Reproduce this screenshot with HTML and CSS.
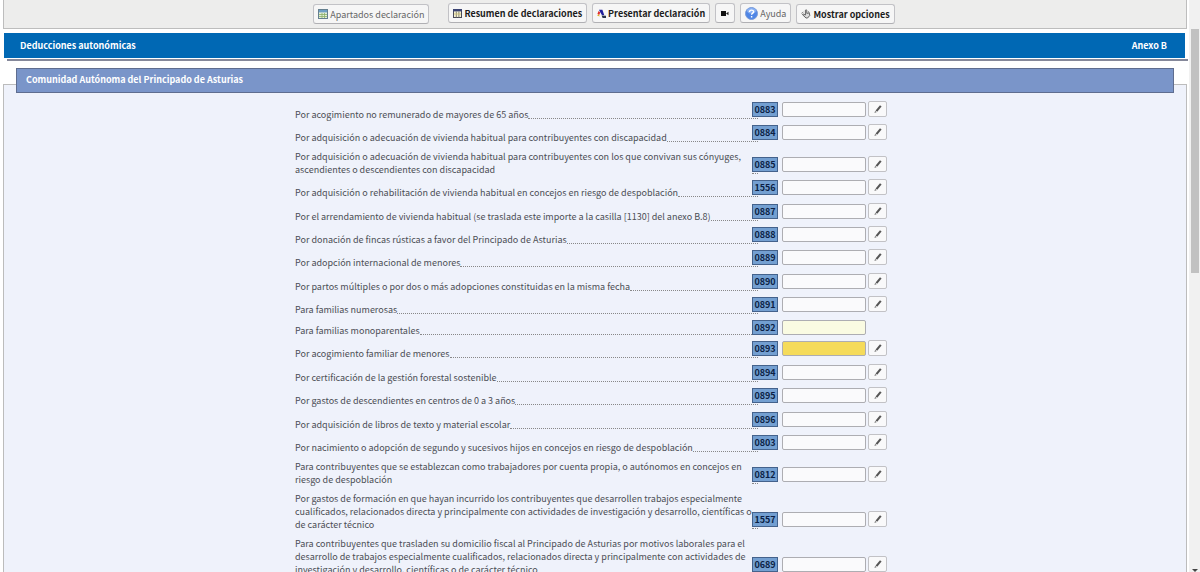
FILE: index.html
```html
<!DOCTYPE html>
<html lang="es">
<head>
<meta charset="utf-8">
<title>Deducciones autonómicas</title>
<link rel="stylesheet" href="styles.css">
</head>
<body>
<svg class="sprite" aria-hidden="true">
  <symbol id="pencil" viewBox="0 0 10 10"><path d="M7 1.2 8.6 2.6 4.2 7.8 2.6 6.4Z" fill="#555"/><path d="M2.2 6.8 3.6 8.2 1.4 9Z" fill="#777"/></symbol>
</svg>
<div class="page">
  <div class="content">
    <header class="toolbar">
      <button class="btn btn--wide btn--soft" type="button">
        <svg class="icon" viewBox="0 0 10 10"><rect x=".5" y=".5" width="9" height="9" fill="#e3efd8" stroke="#65808f"/><rect x="1" y="1" width="8" height="2.4" fill="#6f9fc4"/><path d="M1 5.5h8M1 7.5h8M4 4v5M6.5 4v5" stroke="#8db06a" stroke-width=".8"/></svg>
        Apartados declaración</button>
      <button class="btn btn--main" type="button">
        <svg class="icon icon--sm" viewBox="0 0 9 9"><rect x=".5" y=".5" width="8" height="8" fill="#f6f2d4" stroke="#4a4a58"/><rect x="0" y="0" width="9" height="2.4" fill="#3c4473"/><path d="M3.3 2.5v6M5.9 2.5v6" stroke="#77766a" stroke-width=".9"/><path d="M1 5h7" stroke="#cfc26c" stroke-width=".8"/></svg>
        Resumen de declaraciones</button>
      <button class="btn btn--main" type="button">
        <svg class="icon icon--sm" viewBox="0 0 9 9"><path d="M.4 5 1.6 2 3.2 3.4 2.2 6Z" fill="#e02a2a"/><path d="M2 .8H5.4L7.2 6 5 6.2 3.4 3.6Z" fill="#1d1d9c"/><path d="M0 6.4 2 5.2 2.6 7.4Z" fill="#e0b020"/><path d="M4.6 6.4 9 6.8v2.2H5.6Z" fill="#26324a"/></svg>
        Presentar declaración</button>
      <button class="btn btn--main btn--camera" type="button" aria-label="Vídeo">
        <svg class="icon icon--cam" viewBox="0 0 8 5"><path d="M0 0h5v5H0z" fill="#111"/><path d="M5 2.5 7.5.8v3.4Z" fill="#222"/></svg></button>
      <button class="btn btn--help btn--soft" type="button">
        <svg class="icon icon--lg" viewBox="0 0 13 13"><circle cx="6.5" cy="6.5" r="6" fill="#4f86e6" stroke="#7a9bd6"/><ellipse cx="6.5" cy="3.8" rx="4.4" ry="2.8" fill="#8bb2f4"/><path d="M4.5 4.9C4.5 2.5 8.6 2.6 8.6 4.7 8.6 6.1 6.6 6.1 6.6 7.8M6.6 9v1.5" fill="none" stroke="#fff" stroke-width="1.4"/></svg>
        Ayuda</button>
      <button class="btn" type="button">
        <svg class="icon" viewBox="0 0 10 10"><path d="M4.4 6V1.2q.8-.8 1.4 0V4.4l2.4-.6.6 2.6L6.6 9H5L1.4 5.6q.4-1 1.4-.4L4.4 6.2" fill="#ddd" stroke="#555" stroke-width=".9"/><path d="M.4 4.4 2.4 3M7 2.4l1.4 1" stroke="#666" stroke-width=".8"/></svg>
        Mostrar opciones</button>
    </header>

    <main class="main">
      <div class="banner">
        <h1 class="banner__title">Deducciones autonómicas</h1>
        <span class="banner__annex">Anexo B</span>
      </div>

      <section class="group">
        <h2 class="group__title">Comunidad Autónoma del Principado de Asturias</h2>
        <form class="rows">
          <div class="row"><label class="row__label" for="c0883">Por acogimiento no remunerado de mayores de 65 años</label><span class="row__leader"></span><span class="code">0883</span><input class="field" id="c0883"><button class="edit" type="button" aria-label="Editar 0883"><svg class="edit__icon"><use href="#pencil"/></svg></button></div>
          <div class="row"><label class="row__label" for="c0884">Por adquisición o adecuación de vivienda habitual para contribuyentes con discapacidad</label><span class="row__leader"></span><span class="code">0884</span><input class="field" id="c0884"><button class="edit" type="button" aria-label="Editar 0884"><svg class="edit__icon"><use href="#pencil"/></svg></button></div>
          <div class="row"><label class="row__label" for="c0885">Por adquisición o adecuación de vivienda habitual para contribuyentes con los que convivan sus cónyuges, ascendientes o descendientes con discapacidad</label><span class="row__leader"></span><span class="code">0885</span><input class="field" id="c0885"><button class="edit" type="button" aria-label="Editar 0885"><svg class="edit__icon"><use href="#pencil"/></svg></button></div>
          <div class="row"><label class="row__label" for="c1556">Por adquisición o rehabilitación de vivienda habitual en concejos en riesgo de despoblación</label><span class="row__leader"></span><span class="code">1556</span><input class="field" id="c1556"><button class="edit" type="button" aria-label="Editar 1556"><svg class="edit__icon"><use href="#pencil"/></svg></button></div>
          <div class="row row--tall"><label class="row__label" for="c0887">Por el arrendamiento de vivienda habitual (se traslada este importe a la casilla [1130] del anexo B.8)</label><span class="row__leader"></span><span class="code">0887</span><input class="field" id="c0887"><button class="edit" type="button" aria-label="Editar 0887"><svg class="edit__icon"><use href="#pencil"/></svg></button></div>
          <div class="row"><label class="row__label" for="c0888">Por donación de fincas rústicas a favor del Principado de Asturias</label><span class="row__leader"></span><span class="code">0888</span><input class="field" id="c0888"><button class="edit" type="button" aria-label="Editar 0888"><svg class="edit__icon"><use href="#pencil"/></svg></button></div>
          <div class="row"><label class="row__label" for="c0889">Por adopción internacional de menores</label><span class="row__leader"></span><span class="code">0889</span><input class="field" id="c0889"><button class="edit" type="button" aria-label="Editar 0889"><svg class="edit__icon"><use href="#pencil"/></svg></button></div>
          <div class="row row--tall"><label class="row__label" for="c0890">Por partos múltiples o por dos o más adopciones constituidas en la misma fecha</label><span class="row__leader"></span><span class="code">0890</span><input class="field" id="c0890"><button class="edit" type="button" aria-label="Editar 0890"><svg class="edit__icon"><use href="#pencil"/></svg></button></div>
          <div class="row"><label class="row__label" for="c0891">Para familias numerosas</label><span class="row__leader"></span><span class="code">0891</span><input class="field" id="c0891"><button class="edit" type="button" aria-label="Editar 0891"><svg class="edit__icon"><use href="#pencil"/></svg></button></div>
          <div class="row row--short"><label class="row__label" for="c0892">Para familias monoparentales</label><span class="row__leader"></span><span class="code">0892</span><input class="field field--pale" id="c0892"></div>
          <div class="row"><label class="row__label" for="c0893">Por acogimiento familiar de menores</label><span class="row__leader"></span><span class="code">0893</span><input class="field field--active" id="c0893"><button class="edit" type="button" aria-label="Editar 0893"><svg class="edit__icon"><use href="#pencil"/></svg></button></div>
          <div class="row row--tall"><label class="row__label" for="c0894">Por certificación de la gestión forestal sostenible</label><span class="row__leader"></span><span class="code">0894</span><input class="field" id="c0894"><button class="edit" type="button" aria-label="Editar 0894"><svg class="edit__icon"><use href="#pencil"/></svg></button></div>
          <div class="row"><label class="row__label" for="c0895">Por gastos de descendientes en centros de 0 a 3 años</label><span class="row__leader"></span><span class="code">0895</span><input class="field" id="c0895"><button class="edit" type="button" aria-label="Editar 0895"><svg class="edit__icon"><use href="#pencil"/></svg></button></div>
          <div class="row row--tall"><label class="row__label" for="c0896">Por adquisición de libros de texto y material escolar</label><span class="row__leader"></span><span class="code">0896</span><input class="field" id="c0896"><button class="edit" type="button" aria-label="Editar 0896"><svg class="edit__icon"><use href="#pencil"/></svg></button></div>
          <div class="row"><label class="row__label" for="c0803">Por nacimiento o adopción de segundo y sucesivos hijos en concejos en riesgo de despoblación</label><span class="row__leader"></span><span class="code">0803</span><input class="field" id="c0803"><button class="edit" type="button" aria-label="Editar 0803"><svg class="edit__icon"><use href="#pencil"/></svg></button></div>
          <div class="row"><label class="row__label" for="c0812">Para contribuyentes que se establezcan como trabajadores por cuenta propia, o autónomos en concejos en riesgo de despoblación</label><span class="row__leader"></span><span class="code">0812</span><input class="field" id="c0812"><button class="edit" type="button" aria-label="Editar 0812"><svg class="edit__icon"><use href="#pencil"/></svg></button></div>
          <div class="row"><label class="row__label" for="c1557">Por gastos de formación en que hayan incurrido los contribuyentes que desarrollen trabajos especialmente cualificados, relacionados directa y principalmente con actividades de investigación y desarrollo, científicas o de carácter técnico</label><span class="row__leader"></span><span class="code">1557</span><input class="field" id="c1557"><button class="edit" type="button" aria-label="Editar 1557"><svg class="edit__icon"><use href="#pencil"/></svg></button></div>
          <div class="row"><label class="row__label" for="c0689">Para contribuyentes que trasladen su domicilio fiscal al Principado de Asturias por motivos laborales para el desarrollo de trabajos especialmente cualificados, relacionados directa y principalmente con actividades de investigación y desarrollo, científicas o de carácter técnico</label><span class="row__leader"></span><span class="code">0689</span><input class="field" id="c0689"><button class="edit" type="button" aria-label="Editar 0689"><svg class="edit__icon"><use href="#pencil"/></svg></button></div>
        </form>
      </section>
    </main>
  </div>
  <div class="scrollbar" aria-hidden="true">
    <div class="scrollbar__thumb"></div>
    <svg class="scrollbar__arrow" viewBox="0 0 6 3"><path d="M0 0h6L3 3Z" fill="#444"/></svg>
  </div>
</div>
</body>
</html>
```

FILE: styles.css
```css
* { box-sizing: border-box; }

body {
  margin: 0;
  background: #fff;
  color: #4c4e55;
  font: 9px/13px "Noto Sans CJK SC", "Noto Sans", sans-serif;
}

.sprite { display: none; }

.page {
  display: flex;
  height: 100vh;
  overflow: hidden;
}

.content {
  flex: 1;
  display: flex;
  flex-direction: column;
  min-width: 0;
  padding: 0 1px 0 3px;
}

/* Toolbar */
.toolbar {
  display: flex;
  justify-content: center;
  align-items: flex-start;
  gap: 5px;
  height: 29px;
  flex: none;
  padding: 4px 0 0 18px;
  background: #ededec;
  border: solid #bdbdbd;
  border-width: 0 1px 1px;
}

.btn {
  display: flex;
  align-items: center;
  gap: 2px;
  height: 20px;
  padding: 0 4px;
  border: 1px solid #c2c2c6;
  border-bottom-color: #b0b0b4;
  border-radius: 3px;
  background: #f6f6f6;
  color: #1c1c1c;
  font: bold 9px/13px "Noto Sans CJK SC", "Noto Sans", sans-serif;
  white-space: nowrap;
}

.btn--soft { color: #666; font-weight: normal; }
.btn--wide { margin-right: 14px; }
.btn--main { margin-top: -1px; }
.btn--help { margin-top: -1px; }
.btn--camera { padding: 0 5px; }

.icon { width: 10px; height: 10px; flex: none; }
.icon--sm { width: 9px; height: 9px; }
.icon--lg { width: 13px; height: 13px; }
.icon--cam { width: 8px; height: 5px; }

/* Page heading */
.main {
  flex: 1;
  display: flex;
  flex-direction: column;
  min-height: 0;
  padding-top: 4px;
}

.banner {
  display: flex;
  justify-content: space-between;
  align-items: center;
  flex: none;
  height: 25px;
  margin: 0 2px 0 1px;
  padding: 0 18px 0 16px;
  background: #0068b4;
  box-shadow: 0 1px #fff, 3px 1px #fff, 3px 3px #85889a;
  color: #fff;
  font-weight: bold;
}

.banner__title { margin: 0; font-size: 9px; }

/* Group of deductions */
.group {
  flex: 1 0 auto;
  margin-top: 26px;
  padding: 0 12px;
  background: #eff2fb;
  border: solid #bcbcbc;
  border-width: 1px 1px 0;
}

.group__title {
  margin: -17px 0 5px;
  padding: 4px 9px 6px;
  border: 1px solid #5f6d8f;
  background: #7a95c9;
  color: #fff;
  font-size: 9px;
}

.rows {
  max-width: 600px;
  margin: 0 auto;
  padding-right: 8px;
}

.row {
  display: flex;
  align-items: flex-end;
  min-height: 23px;
  padding-right: 19px;
}

.row:has(.edit) { padding-right: 0; }
.row--tall { min-height: 24px; }
.row--short { min-height: 21px; }

.row__label { padding-top: 6px; }

.row__leader {
  flex: 1 0 6px;
  margin: 0 -6px 2px 0;
  border-bottom: 1px dotted #888;
}

.code {
  flex: none;
  width: 26px;
  height: 15px;
  margin: 0 4px 4px 0;
  border: 1px solid #44628c;
  background: #739fd1;
  color: #0b1f45;
  font-weight: bold;
  text-align: center;
  position: relative;
}

.field {
  flex: none;
  width: 84px;
  height: 15px;
  margin: 0 2px 4px 0;
  padding: 0 3px;
  border: 1px solid #adadb2;
  border-radius: 2px;
  background: #fafafc;
  font: inherit;
}

.field--pale { background: #fafbe2; }
.field--active { background: #f5db5a; }

.row--short .code,
.row--short .field { margin-bottom: 2px; }

.edit {
  display: flex;
  align-items: center;
  justify-content: center;
  flex: none;
  width: 19px;
  height: 16px;
  margin-bottom: 4px;
  padding: 0;
  border: 1px solid #c2c2c6;
  border-radius: 2px;
  background: #f9f9fa;
}

.edit__icon { width: 10px; height: 10px; }

/* Scroll track */
.scrollbar {
  display: flex;
  flex-direction: column;
  align-items: center;
  justify-content: space-between;
  flex: none;
  width: 11px;
  margin-left: 1px;
  padding-top: 29px;
  background: #f1f1f1;
}

.scrollbar__thumb {
  width: 8px;
  height: 45%;
  background: #c1c1c1;
}

.scrollbar__arrow { width: 6px; height: 3px; }
```
